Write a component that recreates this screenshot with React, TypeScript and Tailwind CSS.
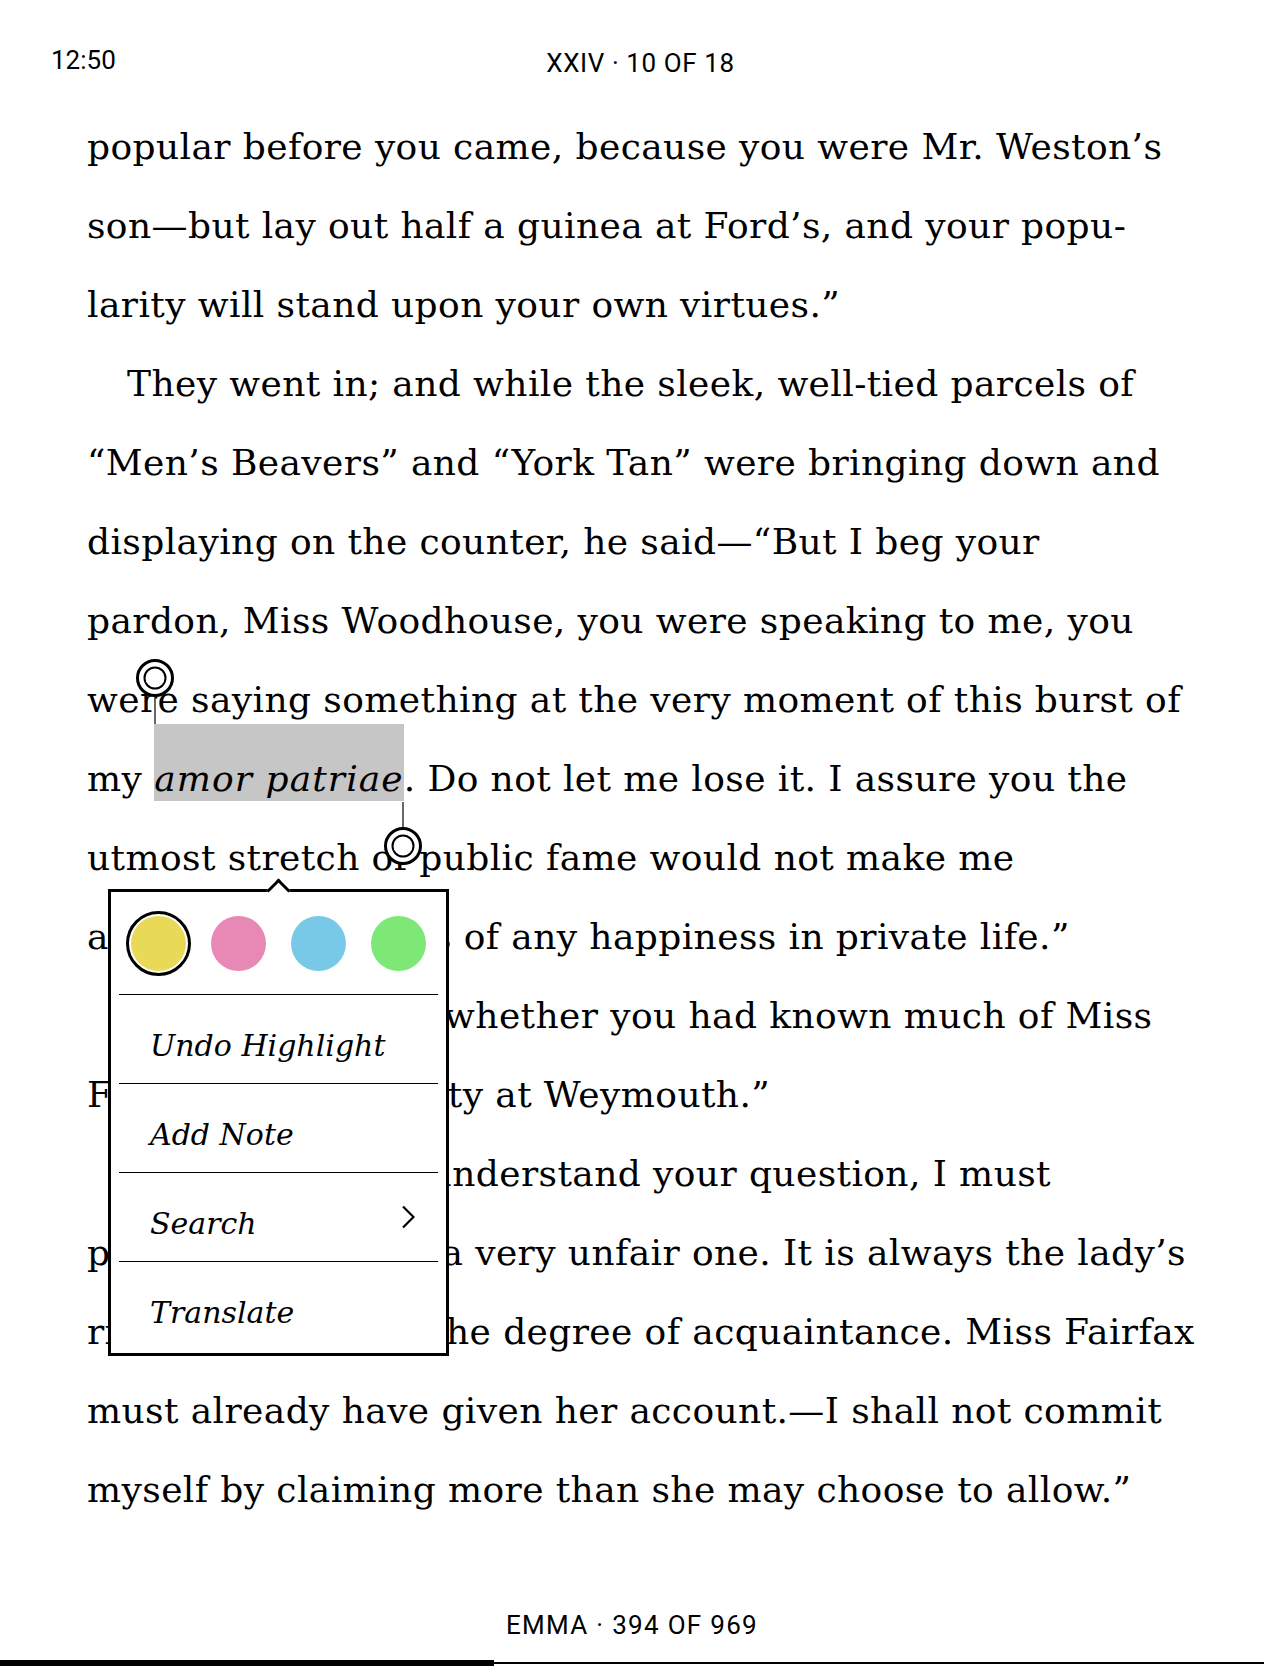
import React from "react"

type Line = { indent?: boolean; content: React.ReactNode }

const lines: Line[] = [
  { content: "popular before you came, because you were Mr. Weston’s" },
  { content: "son—but lay out half a guinea at Ford’s, and your popu-" },
  { content: "larity will stand upon your own virtues.”" },
  { indent: true, content: "They went in; and while the sleek, well-tied parcels of" },
  { content: "“Men’s Beavers” and “York Tan” were bringing down and" },
  { content: "displaying on the counter, he said—“But I beg your" },
  { content: "pardon, Miss Woodhouse, you were speaking to me, you" },
  { content: "were saying something at the very moment of this burst of" },
  {
    content: (
      <>
        my{" "}
        <span className="italic tracking-[1.1px] bg-[#c6c6c6] pt-[34px] pb-[2px]">amor patriae</span>. Do not let me
        lose it. I assure you the
      </>
    ),
  },
  { content: "utmost stretch of public fame would not make me" },
  { content: "amends for the loss of any happiness in private life.”" },
  { indent: true, content: "“I merely asked, whether you had known much of Miss" },
  { content: "Fairfax and her party at Weymouth.”" },
  { indent: true, content: "“And now that I understand your question, I must" },
  { content: "pronounce it to be a very unfair one. It is always the lady’s" },
  { content: "right to decide on the degree of acquaintance. Miss Fairfax" },
  { content: "must already have given her account.—I shall not commit" },
  { content: "myself by claiming more than she may choose to allow.”" },
]

const swatches = ["bg-[#e8d957]", "bg-[#e888b4]", "bg-[#78c9e8]", "bg-[#7de876]"]

const menuItems = [
  { label: "Undo Highlight" },
  { label: "Add Note" },
  { label: "Search", sub: true },
  { label: "Translate" },
]

function Chevron() {
  return (
    <svg width="14" height="24" viewBox="0 0 14 24" fill="none">
      <polyline points="2,1.5 12.5,12 2,22.5" stroke="black" strokeWidth="2.2" />
    </svg>
  )
}

export default function App() {
  return (
    <div className="relative w-[1264px] h-[1680px] overflow-hidden bg-white text-black flex flex-col">
      {/* Top bar */}
      <div className="grid grid-cols-[1fr_auto_1fr] h-[107px] pl-[51px] pr-[34px] pt-[45px] font-['Roboto',sans-serif] text-[26px] leading-[30px]">
        <span>12:50</span>
        <span className="pt-[3px] tracking-[0.6px]">XXIV · 10 OF 18</span>
        <span />
      </div>

      {/* Page text */}
      <div className="pl-[87px] font-['DejaVu_Serif',serif] text-[36px] leading-[79px] tracking-[0.4px]">
        {lines.map((l, i) => (
          <div key={i} className={`whitespace-nowrap ${l.indent ? "pl-[40px]" : ""}`}>
            {l.content}
          </div>
        ))}
      </div>

      {/* Footer */}
      <div className="mt-[81px] text-center font-['Roboto',sans-serif] text-[26px] leading-[30px] tracking-[1.3px]">
        EMMA · 394 OF 969
      </div>

      {/* Progress */}
      <div className="mt-[20px] flex items-center h-[6px]">
        <div className="w-[494px] h-[6px] bg-black" />
        <div className="flex-1 h-[2px] bg-black" />
      </div>

      {/* Selection handles */}
      <svg className="absolute left-[135px] top-[658px]" width="40" height="67" viewBox="0 0 40 67">
        <line x1="20" y1="36" x2="20" y2="66" stroke="black" strokeWidth="1.2" />
        <circle cx="20" cy="20" r="17.5" fill="white" stroke="black" strokeWidth="3" />
        <circle cx="20" cy="20" r="10.5" fill="white" stroke="black" strokeWidth="2" />
      </svg>
      <svg className="absolute left-[383px] top-[801px]" width="40" height="66" viewBox="0 0 40 66">
        <line x1="20" y1="1" x2="20" y2="30" stroke="black" strokeWidth="1.2" />
        <circle cx="20" cy="45" r="17.5" fill="white" stroke="black" strokeWidth="3" />
        <circle cx="20" cy="45" r="10.5" fill="white" stroke="black" strokeWidth="2" />
      </svg>

      {/* Highlight popup */}
      <div className="absolute left-[108px] top-[889px] w-[341px] border-[3px] border-black bg-white px-[8px] pb-[3px]">
        <div className="absolute left-[159px] -top-[10px] w-[17px] h-[17px] rotate-45 border-l-[3px] border-t-[3px] border-black bg-white" />
        <div className="relative flex items-center gap-[25px] h-[102px] px-[12px]">
          {swatches.map((c, i) => (
            <div
              key={c}
              className={`w-[55px] h-[55px] rounded-full ${c} ${
                i === 0 ? "outline-3 outline-black outline-offset-2" : ""
              }`}
            />
          ))}
        </div>
        {menuItems.map((m) => (
          <div key={m.label} className="border-t border-black">
            <div className="flex items-center justify-between h-[88px] pl-[31px] pr-[23px]">
              <span className="pt-[13px] leading-[60px] italic font-['DejaVu_Serif',serif] text-[30px]">
                {m.label}
              </span>
              {m.sub && <Chevron />}
            </div>
          </div>
        ))}
      </div>
    </div>
  )
}
